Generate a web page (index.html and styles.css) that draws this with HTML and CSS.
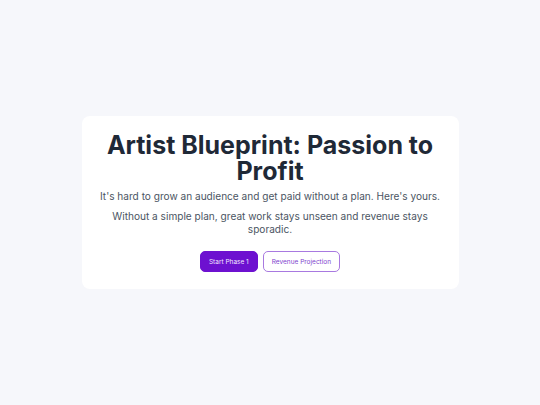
FILE: index.html
```html
<!DOCTYPE html>
<html>
<head>
<meta charset="utf-8">
<link rel="stylesheet" href="styles.css">
</head>
<body>
<main class="page">
  <section class="card">
    <h1 class="title">Artist Blueprint: Passion to Profit</h1>
    <p class="lead">It's hard to grow an audience and get paid without a plan. Here's yours.</p>
    <p class="sub">Without a simple plan, great work stays unseen and revenue stays sporadic.</p>
    <div class="actions">
      <button class="btn btn-primary">Start Phase 1</button>
      <button class="btn btn-outline">Revenue Projection</button>
    </div>
  </section>
</main>
</body>
</html>
```

FILE: styles.css
```css
* { box-sizing: border-box; }
html, body { margin: 0; padding: 0; }
body {
  background: #f6f7fb;
  font-family: Inter, "Noto Sans", sans-serif;
}
.page {
  min-height: 100vh;
  display: flex;
  align-items: center;
  justify-content: center;
}
.card {
  width: 377px;
  background: #ffffff;
  border-radius: 8px;
  padding: 16px 14px 17px;
  text-align: center;
}
.title {
  margin: 0;
  font-size: 25px;
  line-height: 26px;
  font-weight: 700;
  color: #1f2937;
}
.lead {
  margin: 6px 0 0;
  font-size: 10.1px;
  line-height: 13px;
  color: #4b5563;
}
.sub {
  margin: 7px 0 0;
  font-size: 10.1px;
  line-height: 13px;
  color: #4b5563;
}
.actions {
  margin-top: 15px;
  display: flex;
  justify-content: center;
  gap: 5px;
}
.btn {
  font-family: Inter, "Noto Sans", sans-serif;
  font-size: 6.5px;
  height: 21px;
  padding: 0 8px;
  border-radius: 5px;
  cursor: pointer;
}
.btn-primary {
  background: #6d11d0;
  color: #f3e8ff;
  border: 1px solid #6d11d0;
}
.btn-outline {
  background: #ffffff;
  color: #7e3fce;
  border: 1px solid #a879e0;
}
```
